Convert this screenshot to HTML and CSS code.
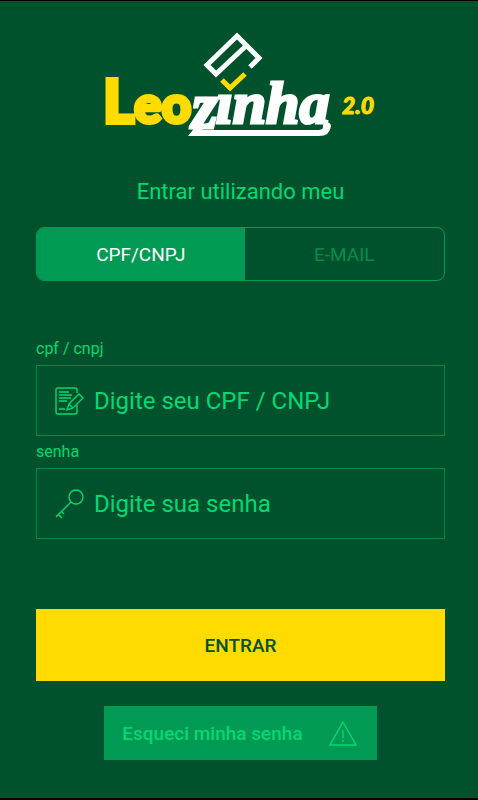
FILE: index.html
```html
<!DOCTYPE html>
<html lang="pt-BR">
<head>
    <meta charset="UTF-8">
    <meta name="viewport" content="width=device-width, initial-scale=1.0">
    <title>Leozinha 2.0</title>
    <link rel="stylesheet" href="styles.css">
</head>
<body>
    <main class="login">

        <svg class="logo" viewBox="0 0 272 108" role="img" aria-label="Leozinha 2.0">
            <g class="logo-ticket">
                <path d="M142 14L111 43L102 34L132 5L154 27L145 36"/>
            </g>
            <path class="logo-check" d="M117 49L125 57L140 43"/>
            <text class="logo-leo" x="-2" y="92"><tspan class="logo-l">L</tspan>eo</text>
            <text class="logo-zinha" x="87" y="97"><tspan class="logo-z">z</tspan></text>
            <text class="logo-zinha" x="111" y="92">ınha</text>
            <path class="logo-line" d="M83 105L92 94H100L97 99H213Q218 99 218 96A4 4 0 1 1 226 95Q225 105 214 105Z"/>
            <text class="logo-version" x="237" y="83">2.0</text>
        </svg>

        <h1>Entrar utilizando meu</h1>

        <div class="tabs">
            <button type="button" class="tab active">CPF/CNPJ</button>
            <button type="button" class="tab">E-MAIL</button>
        </div>

        <form>
            <label for="cpf">cpf / cnpj</label>
            <div class="field">
                <svg class="icon" viewBox="0 0 30 30">
                    <path d="M22 7V4Q22 2 20 2H3Q1 2 1 4V26Q1 28 3 28H20Q22 28 22 26V19"/>
                    <path d="M4 6H14M4 9H17M4 12H16M4 15H12M4 23H10"/>
                    <path d="M12 24L14 18L24 8L28 12L18 22ZM14 18L18 22"/>
                </svg>
                <input type="text" id="cpf" placeholder="Digite seu CPF / CNPJ">
            </div>

            <label for="senha">senha</label>
            <div class="field">
                <svg class="icon" viewBox="0 0 30 30">
                    <circle cx="21" cy="8" r="7"/>
                    <path d="M16 13L1 28M3 25L7 29M6 22L9 25"/>
                </svg>
                <input type="password" id="senha" placeholder="Digite sua senha">
            </div>

            <button type="submit" class="enter">ENTRAR</button>
        </form>

        <a href="#" class="forgot">
            Esqueci minha senha
            <svg class="icon" viewBox="0 0 30 30">
                <path d="M14 4L27 27H1Z"/>
                <path d="M14 12V20M14 22V24"/>
            </svg>
        </a>

    </main>
</body>
</html>
```
FILE: styles.css
```css
* {
    box-sizing: border-box;
}

body {
    margin: 0;
    min-height: 100vh;
    background: #00522d;
    border-top: 1px solid #000;
    border-bottom: 2px solid #000;
    font-family: Roboto, sans-serif;
    color: #00d873;
}

.login {
    display: flex;
    flex-direction: column;
    align-items: center;
    padding: 30px 33px 36px 36px;
}

.logo {
    width: 272px;
    height: 108px;
    overflow: visible;
}

.logo-ticket path,
.logo-check {
    fill: none;
    stroke: #fff;
    stroke-width: 5;
}

.logo-check {
    stroke: #ffdb00;
}

.logo-line {
    fill: #fff;
}

.logo-leo {
    font: 900 51px Lato, sans-serif;
    fill: #ffdb00;
    stroke: #ffdb00;
    stroke-width: 4;
}

.logo-l {
    font-size: 60px;
}

.logo-zinha {
    font: italic bold 60px "Liberation Serif", serif;
    fill: #fff;
    stroke: #fff;
    stroke-width: 3;
}

.logo-z {
    font-size: 66px;
}

.logo-version {
    font: italic 900 23px Lato, sans-serif;
    fill: #ffdb00;
    stroke: #ffdb00;
    stroke-width: 1;
}

h1 {
    margin: 39px 0 21px;
    font-size: 22px;
    line-height: 28px;
    font-weight: 400;
}

.tabs {
    display: flex;
    width: 100%;
    height: 54px;
    margin-bottom: 52px;
    border: 1px solid #009a54;
    border-radius: 8px;
    overflow: hidden;
}

button {
    border: 0;
    padding: 0;
    font-family: inherit;
    cursor: pointer;
}

.tab {
    flex: 49;
    background: none;
    color: #008c4b;
    font-size: 19px;
}

.tab.active {
    flex: 51;
    background: #009a54;
    color: #fff;
}

form {
    width: 100%;
}

label {
    display: block;
    padding: 4px 0;
    font-size: 16px;
    line-height: 24px;
}

.field {
    display: flex;
    align-items: center;
    gap: 9px;
    height: 71px;
    padding: 0 18px;
    border: 1px solid #008745;
}

.icon {
    width: 30px;
    height: 30px;
    flex: none;
    fill: none;
    stroke: #00d873;
    stroke-width: 1.4;
}

.field input {
    flex: 1;
    min-width: 0;
    border: 0;
    padding: 0;
    outline: none;
    background: none;
    color: #00d873;
    font-family: inherit;
    font-size: 24px;
}

.field input::placeholder {
    color: #00d873;
    opacity: 1;
}

.enter {
    display: block;
    width: 100%;
    height: 72px;
    margin-top: 70px;
    background: #ffdb00;
    color: #00522d;
    font-size: 19px;
    font-weight: 500;
}

.forgot {
    display: flex;
    align-items: center;
    gap: 26px;
    height: 54px;
    margin-top: 25px;
    padding: 0 18px;
    background: #009a54;
    color: #00d873;
    font-size: 19px;
    font-weight: 500;
    text-decoration: none;
}
```
